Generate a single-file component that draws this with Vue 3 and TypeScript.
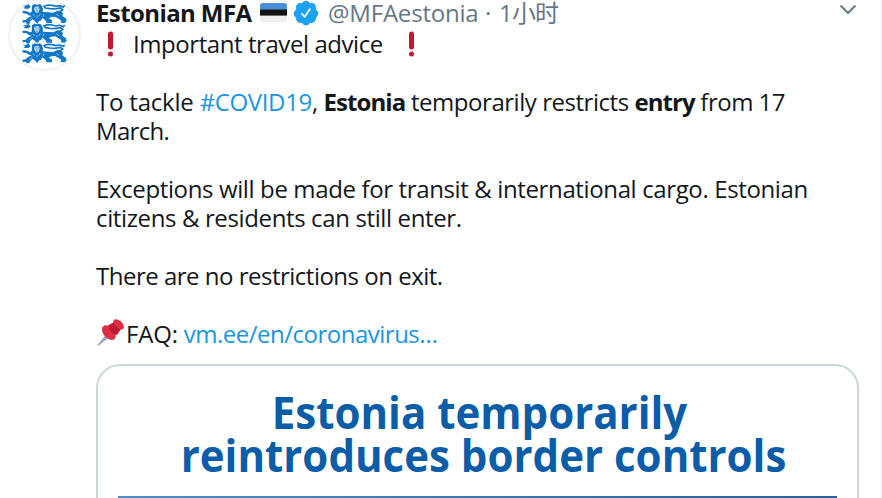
<template>
<div class="tweet">
    <div class="avatar">
        <svg class="lions" viewBox="0 0 135 180">
            <g v-for="n in 3" :key="n" :transform="`translate(0 ${(n - 1) * 59})`">
                <path class="lion" d="M30 5 L37 0 L46 2 L54 0 L60 6 L63 16 L62 24 L80 25 L94 26 L106 20 L117 21 L123 28 L121 36 L131 43 L134 51 L128 57 L116 56 L118 50 L110 44 L99 38 L88 39 L80 43 L90 48 L90 57 L74 57 L70 49 L61 42 L57 50 L52 50 L46 59 L38 51 L32 46 L25 52 L22 59 L14 60 L12 55 L3 56 L1 49 L11 48 L18 41 L29 36 L20 34 L14 29 L3 28 L1 21 L9 21 L17 23 L23 26 L29 24 Z" />
                <path class="lion" d="M2 3 L9 5 L20 1 L26 8 L20 14 L9 14 L4 11 L10 9 Z" />
                <path class="tail" d="M112 24 L122 17 L115 12 L99 15 L84 14 L70 12 L66 7 L77 3 L91 4 L101 7 L112 5 L124 9 L128 4" />
                <path class="face" d="M38 9 L44 7 L51 8 L53 16 L50 25 L44 28 L39 23 L36 15 Z" />
                <path class="detail" d="M40 13 h4 M47 13 h4 M45 15 v7 M41 24 h8" />
                <path class="cut" d="M33 31 l5 6 M55 29 l-5 8 M45 34 v8 M66 30 l-3 8 M31 41 l-9 7 M103 31 l8 5" />
            </g>
        </svg>
    </div>

    <div class="body">
        <div class="header">
            <span class="name">Estonian MFA</span>
            <svg class="flag" viewBox="0 0 27 19">
                <path fill="#4891d9" d="M3 0h21a3 3 0 0 1 3 3v4H0V3a3 3 0 0 1 3-3z" />
                <path fill="#141414" d="M0 6.5h27v6.3H0z" />
                <path fill="#eee" d="M0 12.8h27V16a3 3 0 0 1-3 3H3a3 3 0 0 1-3-3z" />
            </svg>
            <svg class="verified" viewBox="0 0 24 24">
                <path d="M22.5 12.5c0-1.58-.875-2.95-2.148-3.6.154-.435.238-.905.238-1.4 0-2.21-1.71-3.998-3.818-3.998-.47 0-.92.084-1.336.25C14.818 2.415 13.51 1.5 12 1.5s-2.816.917-3.437 2.25c-.415-.165-.866-.25-1.336-.25-2.11 0-3.818 1.79-3.818 4 0 .494.083.964.237 1.4-1.272.65-2.147 2.018-2.147 3.6 0 1.495.782 2.798 1.942 3.486-.02.17-.032.34-.032.514 0 2.21 1.708 4 3.818 4 .47 0 .92-.086 1.335-.25.62 1.334 1.926 2.25 3.437 2.25 1.512 0 2.818-.916 3.437-2.25.415.163.865.248 1.336.248 2.11 0 3.818-1.79 3.818-4 0-.174-.012-.344-.033-.513 1.158-.687 1.943-1.99 1.943-3.484zm-6.616-3.334l-4.334 6.5c-.145.217-.382.334-.625.334-.143 0-.288-.04-.416-.126l-.115-.094-2.415-2.415c-.293-.293-.293-.768 0-1.06s.768-.294 1.06 0l1.77 1.767 3.825-5.74c.23-.345.696-.436 1.04-.207.346.23.44.696.21 1.04z" />
            </svg>
            <span class="handle">@MFAestonia</span>
            <span class="dot">·</span>
            <span class="time">1小时</span>
            <svg class="caret" viewBox="0 0 18 11">
                <path d="M1.5 1.5 L9 9 L16.5 1.5" />
            </svg>
        </div>

        <div class="line advice">
            <svg class="mark" viewBox="0 0 7 26">
                <rect x="1" y="0.5" width="5" height="18" rx="2.5" />
                <circle cx="3.5" cy="23" r="2.5" />
            </svg>
            <span class="important">Important travel advice</span>
            <svg class="mark" viewBox="0 0 7 26">
                <rect x="1" y="0.5" width="5" height="18" rx="2.5" />
                <circle cx="3.5" cy="23" r="2.5" />
            </svg>
        </div>
        <div class="line gap">
            <span class="lead">To tackle </span><a class="tag">#COVID19</a><span>, </span><b>Estonia</b><span class="mid"> temporarily restricts </span><b>entry</b><span class="tight"> from 17</span>
        </div>
        <div class="line"><span class="march">March.</span></div>
        <div class="line gap"><span>Exceptions will be made for transit &amp; international cargo. Estonian</span></div>
        <div class="line"><span>citizens &amp; residents can still enter.</span></div>
        <div class="line gap"><span class="tight">There are no restrictions on exit.</span></div>
        <div class="line gap faq">
            <svg class="pin" viewBox="0 0 27 27">
                <path fill="#99aab5" d="M9 15.5 L12 18.5 L2 26.2 L0.4 27 L1 25.2 Z" />
                <path fill="#be1931" d="M11 6.5 L17 3 L24 10 L20 16 L13 15 Z" />
                <path fill="#dd2e44" d="M17 .8c1.7-1.5 4.8-.3 7 1.8s3.7 5 2.4 7c-1.7 2.2-5.3.8-7.7-1.5S15.2 2.8 17 .8z" />
                <path fill="#dd2e44" d="M6 7.5c2.3-2.3 6-1 9 2s4.9 7 3 10c-1.3 2.2-5.2 2-9-1.3S3.8 9.8 6 7.5z" />
                <path fill="#be1931" d="M12 7 L16 4.2 L22.5 10.7 L19 14.8 C16 15.5 11.5 11.5 12 7z" />
            </svg>
            <span class="question">FAQ: </span><a class="link">vm.ee/en/coronavirus…</a>
        </div>

        <div class="card">
            <div class="title first">Estonia temporarily</div>
            <div class="title second">reintroduces border controls</div>
            <div class="rule"></div>
        </div>
    </div>
</div>
</template>

<script setup lang="ts">
</script>

<style>
    body {
        margin: 0;
        overflow: hidden;
        background-color: #fff;
    }
</style>

<style scoped>
    .tweet {
        box-sizing: border-box;
        width: 882px;
        height: 498px;
        overflow: hidden;
        display: flex;
        border-right: 1px solid #e6ecf0;
        font-family: "Open Sans", "Noto Sans CJK SC", sans-serif;
        font-size: 24px;
        line-height: 29px;
        color: #14171a;
        white-space: pre;
    }
    .avatar {
        box-sizing: border-box;
        flex: none;
        width: 73px;
        height: 73px;
        margin: -2px 15px 0 8px;
        border: 2px solid #f1f1f1;
        border-radius: 50%;
    }
    .lions {
        display: block;
        width: 45px;
        height: 60px;
        margin: 4px 0 0 12px;
    }
    .lion {
        fill: #1177c6;
    }
    .tail {
        fill: none;
        stroke: #1177c6;
        stroke-width: 5;
    }
    .face {
        fill: #b5d5ee;
    }
    .detail {
        fill: none;
        stroke: #5b9fd4;
        stroke-width: 2;
    }
    .cut {
        fill: none;
        stroke: #9cc9ea;
        stroke-width: 2.5;
    }
    .body {
        width: 763px;
    }
    .header {
        display: flex;
        align-items: center;
        height: 29px;
        margin-top: -2px;
        color: #657786;
    }
    .name {
        width: 164px;
        font-weight: 700;
        letter-spacing: -0.6px;
        color: #14171a;
    }
    .flag {
        width: 27px;
        height: 19px;
    }
    .verified {
        width: 28px;
        height: 28px;
        margin: 0 8px 0 5px;
        fill: #1da1f2;
    }
    .handle {
        width: 157px;
        letter-spacing: -0.2px;
    }
    .dot {
        width: 14px;
    }
    .time {
        letter-spacing: -0.8px;
    }
    .caret {
        width: 18px;
        height: 11px;
        margin: -7px 2px 0 auto;
        fill: none;
        stroke: #657786;
        stroke-width: 2;
    }
    .line {
        height: 29px;
        letter-spacing: -0.37px;
    }
    .gap {
        margin-top: 29px;
    }
    .advice {
        display: flex;
        margin-top: 2px;
    }
    .mark {
        width: 7px;
        height: 26px;
        margin: 2px 0 0 11px;
        fill: #be1931;
    }
    .important {
        width: 264px;
        padding-left: 19px;
        letter-spacing: -0.43px;
    }
    .line b {
        letter-spacing: -0.95px;
    }
    .lead {
        letter-spacing: -0.2px;
    }
    .mid {
        letter-spacing: -0.46px;
    }
    .tight {
        letter-spacing: -0.5px;
    }
    .march {
        letter-spacing: -0.7px;
    }
    .question {
        letter-spacing: -0.2px;
    }
    .tag, .link {
        color: #1b95e0;
    }
    .link {
        letter-spacing: -0.5px;
    }
    .faq {
        display: flex;
    }
    .pin {
        width: 27px;
        height: 27px;
        margin: 0 2px 0 1px;
    }
    .card {
        box-sizing: border-box;
        width: 763px;
        height: 200px;
        margin-top: 16px;
        padding-top: 22px;
        border: 2px solid #ccd6dd;
        border-radius: 24px;
    }
    .title {
        height: 43px;
        font-size: 45px;
        font-weight: 700;
        line-height: 47px;
        text-align: center;
        color: #0b5da8;
    }
    .first {
        transform: translateX(2px) scaleX(0.934);
    }
    .second {
        transform: translateX(6px) scaleX(0.934);
    }
    .rule {
        height: 3px;
        margin: 22px 20px 0;
        background: linear-gradient(90deg, #4a90c8, #24629b);
    }
</style>
